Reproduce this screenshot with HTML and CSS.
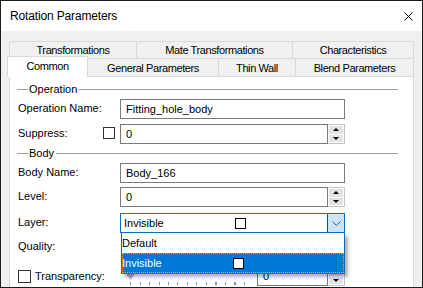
FILE: index.html
```html
<!DOCTYPE html>
<html lang="en">
<head>
    <meta charset="UTF-8">
    <title>Rotation Parameters</title>
    <link rel="stylesheet" href="styles.css">
</head>
<body>
    <div class="window">
        <div class="titlebar">
            <span class="title">Rotation Parameters</span>
            <svg class="close" width="9" height="9" viewBox="0 0 9 9">
                <path d="M0.5 0.5 L8.5 8.5 M8.5 0.5 L0.5 8.5" stroke="#000" stroke-width="1" fill="none"/>
            </svg>
        </div>

        <div class="client">
            <div class="tab-row back">
                <div class="tab" style="width:127px">Transformations</div>
                <div class="tab" style="width:156px">Mate Transformations</div>
                <div class="tab" style="width:122px">Characteristics</div>
            </div>
            <div class="tab-row front">
                <div class="tab active" style="width:81px">Common</div>
                <div class="tab" style="width:131px">General Parameters</div>
                <div class="tab" style="width:77px">Thin Wall</div>
                <div class="tab" style="width:119px">Blend Parameters</div>
            </div>

            <div class="panel">
                <div class="group">Operation</div>
                <div class="field row-1">
                    <div class="label">Operation Name:</div>
                    <div class="edit">Fitting_hole_body</div>
                </div>
                <div class="field row-2">
                    <div class="label">Suppress:<span class="checkbox"></span></div>
                    <div class="spin">
                        <div class="edit">0</div>
                        <div class="spin-btns">
                            <span class="spin-btn up"></span>
                            <span class="spin-btn down"></span>
                        </div>
                    </div>
                </div>

                <div class="group group-body">Body</div>
                <div class="field row-3">
                    <div class="label">Body Name:</div>
                    <div class="edit">Body_166</div>
                </div>
                <div class="field row-4">
                    <div class="label">Level:</div>
                    <div class="spin">
                        <div class="edit">0</div>
                        <div class="spin-btns">
                            <span class="spin-btn up"></span>
                            <span class="spin-btn down"></span>
                        </div>
                    </div>
                </div>
                <div class="field row-5">
                    <div class="label">Layer:</div>
                    <div class="combo">
                        <div class="combo-text"><span class="item-text">Invisible</span><span class="swatch"></span></div>
                        <div class="combo-btn">
                            <svg width="9" height="5" viewBox="0 0 9 5">
                                <path d="M0.5 0.5 L4.5 4.5 L8.5 0.5" stroke="#505050" stroke-width="1" fill="none"/>
                            </svg>
                        </div>
                    </div>
                </div>
                <div class="field row-6">
                    <div class="label">Quality:</div>
                </div>
                <div class="field row-7">
                    <div class="label label-check"><span class="checkbox"></span>Transparency:</div>
                    <div class="slider">
                        <span class="thumb"></span>
                        <span class="ticks"></span>
                    </div>
                    <div class="spin spin-small">
                        <div class="edit">0</div>
                        <div class="spin-btns">
                            <span class="spin-btn up"></span>
                            <span class="spin-btn down"></span>
                        </div>
                    </div>
                </div>

                <!-- open drop-down of the Layer combo -->
                <div class="dropdown">
                    <div class="option">Default</div>
                    <div class="option selected"><span class="item-text">Invisible</span><span class="swatch"></span></div>
                </div>
            </div>
        </div>
    </div>
</body>
</html>
```

FILE: styles.css
```css
* {
    box-sizing: border-box;
}

body {
    margin: 0;
    font-family: "Liberation Sans", Arial, sans-serif;
    font-size: 11px;
    color: #000;
}

.window {
    width: 423px;
    height: 288px;
    border: 1px solid #1c1c1c;
    background: #f0f0f0;
    overflow: hidden;
}

.titlebar {
    height: 30px;
    background: #fff;
    display: flex;
    align-items: center;
    justify-content: space-between;
    padding: 0 9px 0 9px;
}

.title {
    font-size: 12px;
    letter-spacing: -0.15px;
}

.client {
    padding: 10px 8px 0 8px;
}

/* tabs */
.tab-row {
    display: flex;
}

.tab {
    border: 1px solid #d9d9d9;
    border-right: none;
    border-bottom: none;
    background: #f0f0f0;
    text-align: center;
    letter-spacing: -0.4px;
    white-space: nowrap;
}

.tab:last-child {
    border-right: 1px solid #d9d9d9;
}

.back .tab {
    height: 17px;
    line-height: 16px;
}

.front {
    height: 18px;
}

.front .tab {
    height: 18px;
    line-height: 18px;
}

.front .tab.active {
    height: 21px;
    margin: -2px -1px 0 -2px;
    line-height: 19px;
    background: #fff;
    border-right: 1px solid #d9d9d9;
    position: relative;
    z-index: 1;
}

/* page */
.panel {
    position: relative;
    height: 240px;
    background: #fff;
    border: 1px solid #d9d9d9;
    padding: 5px 15px 0 7px;
}

.group {
    display: flex;
    align-items: center;
    height: 14px;
}

.group::before {
    content: "";
    width: 11px;
    border-top: 1px solid #a0a0a0;
    margin-right: 1px;
}

.group::after {
    content: "";
    flex: 1;
    border-top: 1px solid #a0a0a0;
    margin-left: 2px;
}

.group-body {
    margin-top: 2px;
}

.field {
    display: flex;
    align-items: center;
    height: 20px;
}

.row-1 { margin-top: 3px; }
.row-2 { margin-top: 5px; }
.row-3 { margin-top: 3px; }
.row-4 { margin-top: 4px; }
.row-5 { margin-top: 6px; }
.row-6 { margin-top: 4px; }
.row-7 { margin-top: 9px; }

.label {
    width: 103px;
    flex: none;
    padding-left: 1px;
    display: flex;
    align-items: center;
    justify-content: space-between;
    margin-top: -2px;
}

.label-check {
    justify-content: flex-start;
    margin-top: 0;
}

.checkbox {
    width: 12px;
    height: 12px;
    border: 1px solid #333;
    background: #fff;
    margin-right: 5px;
}

.label-check .checkbox {
    width: 13px;
    height: 13px;
    margin-right: 4px;
}

.edit {
    width: 225px;
    height: 20px;
    border: 1px solid #7a7a7a;
    background: #fff;
    padding-left: 5px;
    line-height: 18px;
    white-space: nowrap;
}

/* spin box */
.spin {
    display: flex;
    width: 225px;
    height: 20px;
}

.spin .edit {
    width: auto;
    flex: 1;
}

.spin-btns {
    width: 17px;
    border: 1px solid #c4c4c4;
    border-left: none;
    background: #fff;
    display: flex;
    flex-direction: column;
    gap: 1px;
    padding: 1px;
}

.spin-btn {
    flex: 1;
    background: #e3e3e3;
    display: flex;
    align-items: center;
    justify-content: center;
}

.spin-btn::after {
    content: "";
    border-left: 3px solid transparent;
    border-right: 3px solid transparent;
}

.spin-btn.up::after {
    border-bottom: 3px solid #000;
}

.spin-btn.down::after {
    border-top: 3px solid #000;
}

.spin-small {
    width: 88px;
}

/* combo */
.combo {
    display: flex;
    width: 225px;
    height: 20px;
    border: 1px solid #0071c5;
    background: #fff;
}

.combo-text {
    flex: 1;
    display: flex;
    align-items: center;
    padding-left: 3px;
}

.item-text {
    width: 111px;
}

.swatch {
    width: 11px;
    height: 11px;
    border: 1px solid #000;
    background: #fff;
}

.combo-btn {
    width: 17px;
    background: #cce4f7;
    border-left: 1px solid #005499;
    display: flex;
    align-items: center;
    justify-content: center;
}

.dropdown {
    position: absolute;
    left: 111px;
    top: 156px;
    width: 224px;
    height: 41px;
    border: 1px solid #0071c5;
    border-top: none;
    background: #fff;
    box-shadow: 3px 3px 3px rgba(0, 0, 0, 0.3);
}

.option {
    height: 20px;
    display: flex;
    align-items: center;
}

.option.selected {
    height: 20px;
    background: #0078d7;
    color: #fff;
    outline: 1px dotted #f5a142;
    outline-offset: -1px;
}

/* transparency slider */
.slider {
    width: 137px;
    height: 20px;
    display: flex;
    flex-direction: column;
    padding-left: 7px;
}

.thumb {
    width: 7px;
    height: 12px;
    margin-top: 2px;
    background: #b8b8b8;
    clip-path: polygon(0 0, 100% 0, 100% 60%, 50% 100%, 0 60%);
}

.ticks {
    width: 120px;
    height: 3px;
    margin: 2px 0 0 3px;
    background: repeating-linear-gradient(to right, #909090 0 1px, transparent 1px 9.5px);
}
```
